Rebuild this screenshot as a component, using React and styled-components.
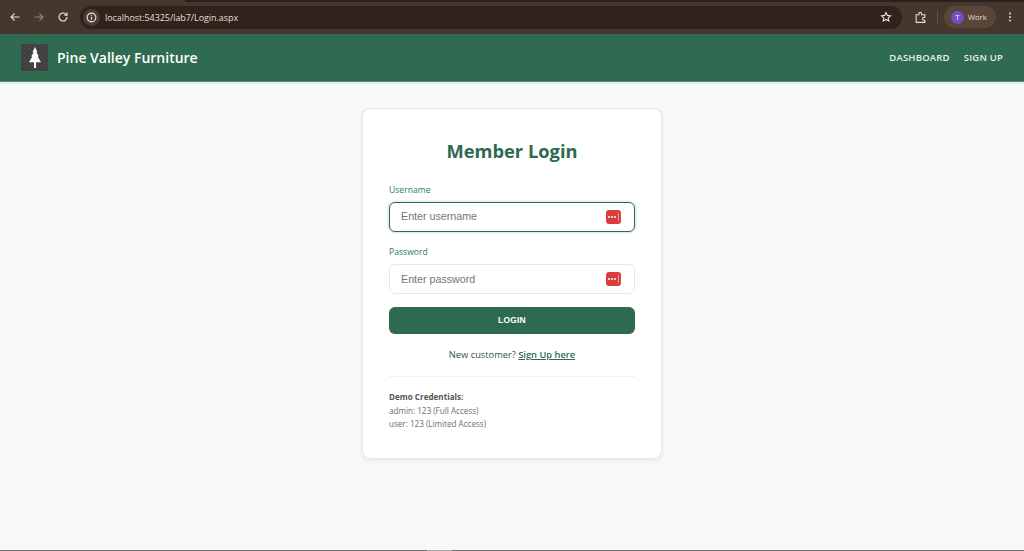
import { createGlobalStyle, styled } from "styled-components";

const GlobalStyle = createGlobalStyle`
  html, body {
    margin: 0;
    padding: 0;
    height: 100%;
    background: #f8f9fa;
    overflow: hidden;
  }
  #root {
    height: 100%;
  }
  * {
    box-sizing: border-box;
  }
`;

const Page = styled.div`
  height: 551px;
  display: flex;
  flex-direction: column;
  font-family: "Open Sans", "Noto Sans", sans-serif;
`;

const TabStrip = styled.div`
  height: 2px;
  flex: none;
  background: linear-gradient(to right, #45362e 185px, #2c211b 185px);
`;

const Chrome = styled.div`
  height: 32px;
  flex: none;
  display: flex;
  align-items: center;
  padding: 0 0 2px 3px;
  background: #45362e;
`;

const NavButton = styled.span`
  width: 24px;
  height: 24px;
  flex: none;
  display: flex;
  align-items: center;
  justify-content: center;
  color: ${(p) => (p.$dim ? "#8f847d" : "#e4dfdb")};
  margin-left: ${(p) => p.$left || 0}px;
`;

const Address = styled.div`
  width: 822px;
  height: 23px;
  margin-left: 5px;
  flex: none;
  display: flex;
  align-items: center;
  background: #2f231c;
  border-radius: 12px;
  padding: 0 10px 0 3px;
`;

const SiteInfo = styled.span`
  width: 17px;
  height: 17px;
  border-radius: 50%;
  background: #4b3d35;
  display: flex;
  align-items: center;
  justify-content: center;
  color: #ece7e3;
  margin-right: 5px;
`;

const Url = styled.span`
  flex: 1;
  font-size: 8.9px;
  color: #e6dfd9;
`;

const Profile = styled.div`
  height: 22px;
  width: 52px;
  display: flex;
  align-items: center;
  gap: 4px;
  padding-left: 7px;
  border-radius: 11px;
  background: #5a4638;
  color: #e4dfdb;
  font-size: 7.6px;
`;

const Avatar = styled.span`
  width: 13px;
  height: 13px;
  border-radius: 50%;
  background: #7150c4;
  color: #fff;
  font-size: 7px;
  display: flex;
  align-items: center;
  justify-content: center;
`;

const Divider = styled.span`
  width: 1px;
  height: 12px;
  background: #65564c;
  margin: 0 6px 0 5px;
`;

const Header = styled.header`
  height: 48px;
  flex: none;
  display: flex;
  align-items: center;
  justify-content: space-between;
  padding: 0 21px;
  background: #2f6b51;
  border-bottom: 1px solid #5c8a76;
  box-shadow: 0 1px 3px rgba(0, 0, 0, 0.1);
`;

const Brand = styled.div`
  display: flex;
  align-items: center;
  gap: 9px;
  color: #fff;
  font-size: 14px;
  font-weight: 600;
`;

const Logo = styled.span`
  width: 27px;
  height: 27px;
  background-color: #3f3f3f;
  background-image: repeating-linear-gradient(45deg, rgba(255, 255, 255, 0.05) 0 1px, transparent 1px 3px);
  display: flex;
  align-items: center;
  justify-content: center;
`;

const Nav = styled.nav`
  display: flex;
  gap: 14px;
`;

const NavLink = styled.a`
  color: #e7f0ec;
  font-size: 9.5px;
  font-weight: 600;
  letter-spacing: 0.2px;
`;

const Main = styled.main`
  flex: 1;
  display: flex;
  justify-content: center;
  align-items: flex-start;
  padding-top: 26px;
`;

const Card = styled.section`
  width: 300px;
  height: 351px;
  padding: 0 26px;
  background: #fff;
  border: 1px solid #e3e8e6;
  border-radius: 8px;
  box-shadow: 0 2px 5px rgba(0, 0, 0, 0.08);
  display: flex;
  flex-direction: column;
`;

const Title = styled.h1`
  margin: 30px 0 0;
  font-size: 18.3px;
  line-height: 24px;
  font-weight: 700;
  color: #2d6a4f;
  text-align: center;
`;

const Label = styled.label`
  display: block;
  margin-top: ${(p) => p.$top}px;
  height: 13px;
  font-size: 8.6px;
  line-height: 13px;
  font-weight: 500;
  color: #2a8058;
`;

const Field = styled.div`
  margin-top: 5px;
  height: 30px;
  display: flex;
  align-items: center;
  justify-content: space-between;
  padding: 0 13px 0 11px;
  border-radius: 6px;
  border: 1px solid ${(p) => (p.$focused ? "#2d6a4f" : "#e5e8ea")};
  box-shadow: ${(p) => (p.$focused ? "0 0 0 1.5px rgba(45, 106, 79, 0.12)" : "none")};
`;

const Placeholder = styled.span`
  font-family: "Liberation Sans", Arial, sans-serif;
  font-size: 10.7px;
  color: #757575;
  margin-bottom: ${(p) => (p.$focused ? 2 : 1)}px;
`;

const KeyBadge = styled.span`
  width: 15px;
  height: 14px;
  border-radius: 3px;
  background: #db3d3d;
  display: flex;
  align-items: center;
  justify-content: center;
  gap: 1px;
`;

const Dot = styled.i`
  width: 2px;
  height: 2px;
  border-radius: 50%;
  background: #fff;
`;

const Caret = styled.i`
  width: 1px;
  height: 8px;
  margin-left: 1px;
  background: rgba(255, 255, 255, 0.45);
`;

const LoginButton = styled.button`
  margin-top: 13px;
  height: 27px;
  padding: 0 0 2px;
  border: none;
  border-radius: 6px;
  background: #2d6a4f;
  color: #fff;
  font-family: "Liberation Sans", Arial, sans-serif;
  font-size: 8.5px;
  font-weight: 700;
  letter-spacing: 0.2px;
`;

const Signup = styled.p`
  margin: 14px 0 0;
  font-size: 9.3px;
  line-height: 14px;
  text-align: center;
  color: #33504c;
`;

const SignupLink = styled.a`
  color: #2d6a4f;
  font-weight: 600;
  text-decoration: underline;
`;

const Rule = styled.hr`
  margin: 14px 0 0;
  border: none;
  border-top: 1px solid #f0f1f2;
`;

const Demo = styled.div`
  margin-top: 13px;
  font-size: 8.1px;
  line-height: 13.5px;
  color: #6c6f72;
`;

const DemoTitle = styled.div`
  font-weight: 700;
  color: #555;
`;

const BottomEdge = styled.div`
  height: 1px;
  flex: none;
  background: linear-gradient(to right, #6d6f71 427px, #a5a7a9 427px, #a5a7a9 452px, #6d6f71 452px);
`;

function Key() {
  return (
    <KeyBadge>
      <Dot />
      <Dot />
      <Dot />
      <Caret />
    </KeyBadge>
  );
}

export default function App() {
  return (
    <Page>
      <GlobalStyle />
      <TabStrip />
      <Chrome>
        <NavButton>
          <svg width="12" height="12" viewBox="0 0 24 24" fill="none" stroke="currentColor" strokeWidth="2.2">
            <path d="M21 12H4M11 5l-7 7 7 7" />
          </svg>
        </NavButton>
        <NavButton $dim>
          <svg width="12" height="12" viewBox="0 0 24 24" fill="none" stroke="currentColor" strokeWidth="2.2">
            <path d="M3 12h17M13 5l7 7-7 7" />
          </svg>
        </NavButton>
        <NavButton>
          <svg width="12" height="12" viewBox="0 0 24 24" fill="none" stroke="currentColor" strokeWidth="2.4">
            <path d="M20 12a8 8 0 1 1-2.5-5.800L20 8.500M20 3v5.500h-5.500" />
          </svg>
        </NavButton>
        <Address>
          <SiteInfo>
            <svg width="11" height="11" viewBox="0 0 24 24" fill="none" stroke="currentColor" strokeWidth="2.4">
              <circle cx="12" cy="12" r="9.500" />
              <path d="M12 11v6M12 7v2" />
            </svg>
          </SiteInfo>
          <Url>localhost:54325/lab7/Login.aspx</Url>
          <svg width="12" height="12" viewBox="0 0 24 24" fill="none" stroke="#ece7e3" strokeWidth="2.2">
            <path d="M12 3l2.700 5.800 6.300.8-4.600 4.300 1.200 6.200L12 17l-5.600 3.100 1.200-6.200L3 9.600l6.300-.8z" />
          </svg>
        </Address>
        <NavButton $left={6}>
          <svg width="13" height="13" viewBox="0 0 24 24" fill="none" stroke="currentColor" strokeWidth="2">
            <path d="M4 7h5V5a2.500 2.500 0 0 1 5 0v2h6v5h-2a2.500 2.500 0 0 0 0 5h2v4H4z" />
          </svg>
        </NavButton>
        <Divider />
        <Profile>
          <Avatar>T</Avatar>
          Work
        </Profile>
        <NavButton $left={2}>
          <svg width="12" height="12" viewBox="0 0 24 24" fill="#e4dfdb">
            <circle cx="12" cy="5" r="2" />
            <circle cx="12" cy="12" r="2" />
            <circle cx="12" cy="19" r="2" />
          </svg>
        </NavButton>
      </Chrome>
      <Header>
        <Brand>
          <Logo>
            <svg width="12" height="21" viewBox="0 0 14 22" fill="#fff" preserveAspectRatio="none">
              <path d="M7 0l3 5.500H8.500L11.500 10H10l4 6H8.200v6H5.800v-6H0l4-6H2.500L5.500 5.500H4z" />
            </svg>
          </Logo>
          Pine Valley Furniture
        </Brand>
        <Nav>
          <NavLink>DASHBOARD</NavLink>
          <NavLink>SIGN UP</NavLink>
        </Nav>
      </Header>
      <Main>
        <Card>
          <Title>Member Login</Title>
          <Label $top={21}>Username</Label>
          <Field $focused>
            <Placeholder $focused>Enter username</Placeholder>
            <Key />
          </Field>
          <Label $top={14}>Password</Label>
          <Field>
            <Placeholder>Enter password</Placeholder>
            <Key />
          </Field>
          <LoginButton>LOGIN</LoginButton>
          <Signup>
            New customer? <SignupLink>Sign Up here</SignupLink>
          </Signup>
          <Rule />
          <Demo>
            <DemoTitle>Demo Credentials:</DemoTitle>
            <div>admin: 123 (Full Access)</div>
            <div>user: 123 (Limited Access)</div>
          </Demo>
        </Card>
      </Main>
      <BottomEdge />
    </Page>
  );
}
